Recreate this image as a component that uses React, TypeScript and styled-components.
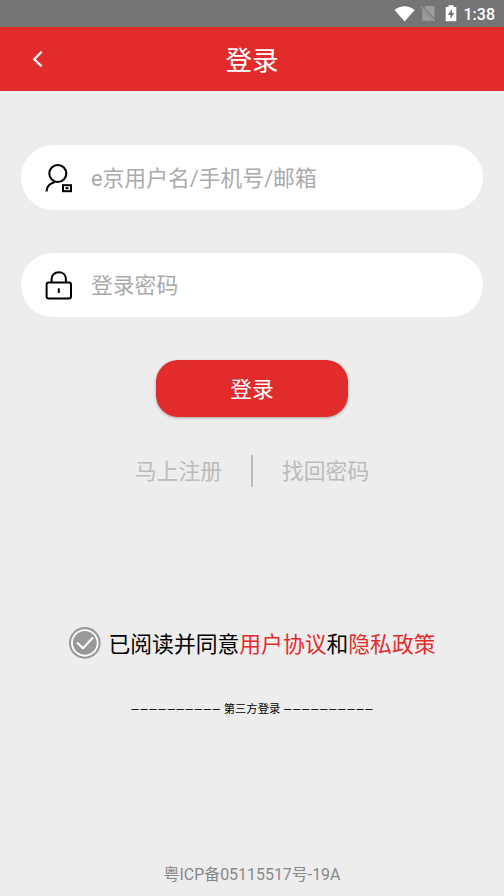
import React from "react";
import styled, { createGlobalStyle } from "styled-components";

const GlobalStyle = createGlobalStyle`
  *, *::before, *::after { box-sizing: border-box; }
  html, body, #root { height: 100%; }
  body {
    margin: 0;
    background: #ededed;
    font-family: Roboto, "Noto Sans CJK SC", sans-serif;
  }
`;

const Screen = styled.main`
  display: flex;
  flex-direction: column;
  width: 504px;
  height: 896px;
  overflow: hidden;
  background: #ededed;
`;

const StatusBar = styled.div`
  display: flex;
  flex: none;
  align-items: center;
  justify-content: flex-end;
  height: 27px;
  padding-right: 9px;
  background: #757575;
  color: #fff;
`;

const Clock = styled.span`
  margin-left: 5px;
  font-size: 16px;
  font-weight: 500;
  line-height: 27px;
  padding-top: 1px;
`;

const Header = styled.header`
  display: grid;
  grid-template-columns: 75px 1fr 75px;
  flex: none;
  align-items: center;
  height: 64px;
  background: #e22c2b;
  color: #fff;
`;

const BackButton = styled.button`
  display: flex;
  align-items: center;
  justify-content: center;
  height: 64px;
  padding: 0;
  border: 0;
  background: none;
  color: inherit;
`;

const Title = styled.h1`
  margin: 0;
  padding-top: 4px;
  font-size: 26.6px;
  font-weight: 400;
  line-height: 60px;
  text-align: center;
`;

const Form = styled.form`
  display: flex;
  flex-direction: column;
  align-items: center;
  padding: 54px 21px 0;
`;

const Field = styled.label`
  display: flex;
  align-items: center;
  width: 462px;
  height: 64.5px;
  margin-bottom: 43px;
  padding-left: 23px;
  border-radius: 33px;
  background: #fff;
`;

const Input = styled.input`
  flex: 1;
  min-width: 0;
  height: 42px;
  margin: 0 30px 0 17px;
  padding: 2px 0 0;
  border: 0;
  outline: 0;
  background: none;
  font: 21.8px Roboto, "Noto Sans CJK SC", sans-serif;
  &::placeholder { color: #aaa; opacity: 1; }
`;

const SubmitButton = styled.button`
  width: 192px;
  height: 56.5px;
  padding: 3px 0 0;
  border: 0;
  border-radius: 22px;
  background: #e22c2b;
  box-shadow: 0 1px 3px rgba(0, 0, 0, 0.3);
  color: #fff;
  font: 21.8px / 53px Roboto, "Noto Sans CJK SC", sans-serif;
`;

const Links = styled.nav`
  display: grid;
  grid-template-columns: 1fr 2px 1fr;
  grid-template-rows: 32px;
  column-gap: 29px;
  flex: none;
  height: 32px;
  margin-top: 38.5px;
`;

const TextLink = styled.a<{ $align: "left" | "right" }>`
  color: #bbb;
  font-size: 21.8px;
  line-height: 34px;
  text-align: ${({ $align }) => $align};
`;

const Divider = styled.span`
  background: #bbb;
`;

const Agreement = styled.div`
  display: flex;
  flex: none;
  align-items: center;
  height: 34px;
  margin-top: 139px;
  padding-left: 68px;
`;

const AgreementText = styled.p`
  margin: 0 0 0 6.5px;
  padding-top: 3px;
  color: #000;
  font-size: 21.8px;
  line-height: 34px;
  white-space: nowrap;
`;

const Policy = styled.span`
  color: #e22c2b;
`;

const ThirdParty = styled.div`
  display: flex;
  justify-content: center;
  gap: 3px;
  margin-top: 42px;
  color: #000;
  font-size: 11.3px;
  line-height: 16px;
  white-space: nowrap;
`;

const Dashes = styled.span`
  letter-spacing: 0.2px;
`;

const Footer = styled.footer`
  margin-top: auto;
  padding-bottom: 9px;
  color: #888;
  font-size: 15.95px;
  line-height: 24px;
  text-align: center;
`;

const StatusIcons = () => (
  <svg width="65" height="27" viewBox="0 0 65 27" fill="none">
    <path d="M.6 10.1C6.2 4.9 15.1 4.9 20.6 10.1L10.6 21.6Z" fill="#fff" />
    <path d="M32 6H40.5V18.2L30.2 7.8ZM28.3 9.7L39.4 20.8H28.3Z" fill="#9c9c9c" />
    <path d="M27 6.8L40.8 21" stroke="#9c9c9c" strokeWidth="1.4" />
    <path d="M54.5 5.2H59.5V7H62.3V21.2H51.7V7H54.5Z" fill="#fff" />
    <path d="M57.9 9L53.9 15H56.4V19L60.3 13H57.9Z" fill="#757575" />
  </svg>
);

const BackIcon = () => (
  <svg width="12" height="18" viewBox="0 0 12 18" fill="none">
    <path d="M9.7 1.8L2.2 9.2L9.7 16.4" stroke="#fff" strokeWidth="2.2" />
  </svg>
);

const UserIcon = () => (
  <svg width="30" height="32" viewBox="0 0 30 32" fill="none" stroke="#000">
    <circle cx="13.8" cy="12.5" r="8.5" strokeWidth="2.1" />
    <path d="M2.6 30.5V29.8C2.6 25.5 6.5 21.8 11.3 21" strokeWidth="2.1" />
    <rect x="19" y="24.2" width="8" height="6" strokeWidth="2" />
    <rect x="21.5" y="26.2" width="3" height="2" fill="#000" stroke="none" />
  </svg>
);

const LockIcon = () => (
  <svg width="30" height="32" viewBox="0 0 30 32" fill="none" stroke="#000" strokeWidth="2">
    <rect x="2.6" y="13.6" width="24.4" height="15.8" rx="2" />
    <path d="M7.6 13.6V10.2C7.6 6.2 10.4 3.3 14.8 3.3C19.1 3.3 21.9 6.2 21.9 10.2V13.6" />
    <path d="M14.8 19.3V24" />
  </svg>
);

const CheckIcon = () => (
  <svg width="34" height="34" viewBox="0 0 34 34" fill="none">
    <circle cx="16.8" cy="16.9" r="14.8" fill="#fff" stroke="#999" strokeWidth="2.1" />
    <circle cx="16.8" cy="16.9" r="11.9" fill="#999" />
    <path d="M9 16.6L15 22.3L25 11.5" stroke="#fff" strokeWidth="2.1" />
  </svg>
);

const DASHES = "—".repeat(10);

export default function App() {
  return (
    <Screen>
      <GlobalStyle />
      <StatusBar>
        <StatusIcons />
        <Clock>1:38</Clock>
      </StatusBar>
      <Header>
        <BackButton type="button" aria-label="返回">
          <BackIcon />
        </BackButton>
        <Title>登录</Title>
      </Header>
      <Form>
        <Field>
          <UserIcon />
          <Input type="text" placeholder="e京用户名/手机号/邮箱" />
        </Field>
        <Field>
          <LockIcon />
          <Input type="password" placeholder="登录密码" />
        </Field>
        <SubmitButton type="button">登录</SubmitButton>
      </Form>
      <Links>
        <TextLink $align="right">马上注册</TextLink>
        <Divider />
        <TextLink $align="left">找回密码</TextLink>
      </Links>
      <Agreement>
        <CheckIcon />
        <AgreementText>
          已阅读并同意<Policy>用户协议</Policy>和<Policy>隐私政策</Policy>
        </AgreementText>
      </Agreement>
      <ThirdParty>
        <Dashes>{DASHES}</Dashes>
        <span>第三方登录</span>
        <Dashes>{DASHES}</Dashes>
      </ThirdParty>
      <Footer>粤ICP备05115517号-19A</Footer>
    </Screen>
  );
}
